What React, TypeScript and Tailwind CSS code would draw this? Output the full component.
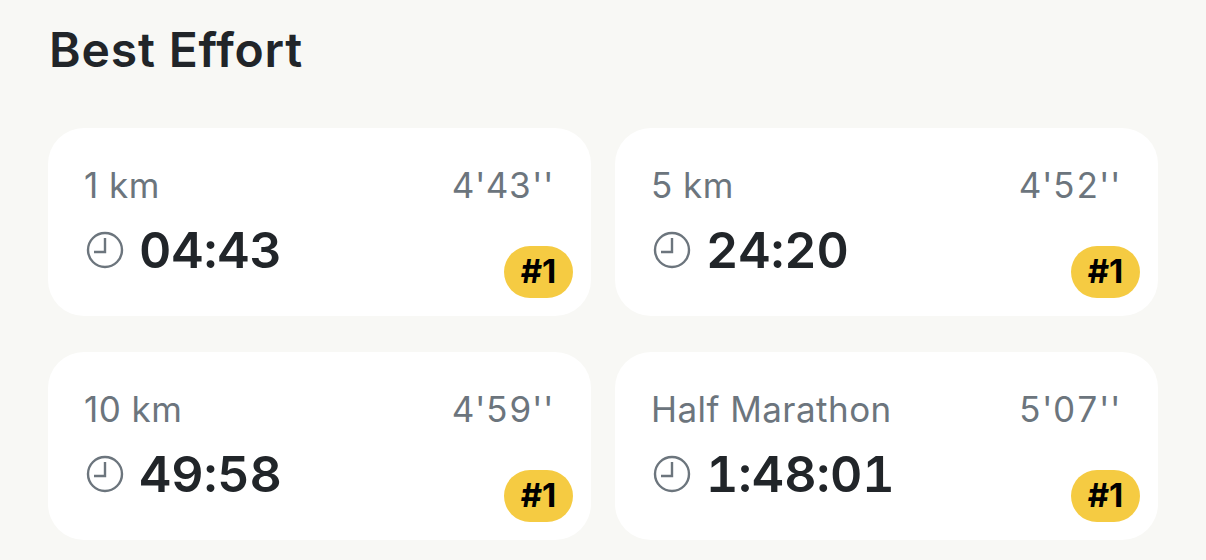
const efforts = [
  { label: "1 km", pace: "4'43''", time: "04:43" },
  { label: "5 km", pace: "4'52''", time: "24:20" },
  { label: "10 km", pace: "4'59''", time: "49:58" },
  { label: "Half Marathon", pace: "5'07''", time: "1:48:01" },
];

function ClockIcon() {
  return (
    <svg width="38" height="38" viewBox="0 0 38 38" fill="none" stroke="#6c757d" strokeWidth="2.4" className="shrink-0">
      <circle cx="19" cy="19" r="17" />
      <path d="M19 7v14H8" />
    </svg>
  );
}

export default function App() {
  return (
    <div className="w-[1206px] h-[560px] overflow-hidden bg-[#f8f8f5] px-[48px] font-['Inter',sans-serif]">
      <h1 className="pt-[21px] pl-[1px] text-[48px] leading-[58px] font-semibold tracking-[0.85px] text-[#212529]">Best Effort</h1>
      <div className="mt-[49px] grid grid-cols-[543px_543px] gap-x-[24px] gap-y-[36px]">
        {efforts.map((e) => (
          <div key={e.label} className="relative h-[188px] rounded-[36px] bg-white pl-[36px] pr-[37px] pt-[35px]">
            <div className="flex justify-between text-[35px] leading-[44px] tracking-[0.45px] text-[#6c757d]">
              <span>{e.label}</span>
              <span className="tabular-nums">{e.pace}</span>
            </div>
            <div className="mt-[13px] ml-[2px] flex items-center gap-[15px]">
              <ClockIcon />
              <span className="text-[50px] leading-[60px] font-semibold tabular-nums [font-feature-settings:'calt'_0] text-[#212529]">{e.time}</span>
            </div>
            <span className="absolute right-[18px] bottom-[18px] flex h-[52px] w-[69px] items-center justify-center rounded-full bg-[#f5cb42] text-[33px] font-bold text-black">#1</span>
          </div>
        ))}
      </div>
    </div>
  );
}
